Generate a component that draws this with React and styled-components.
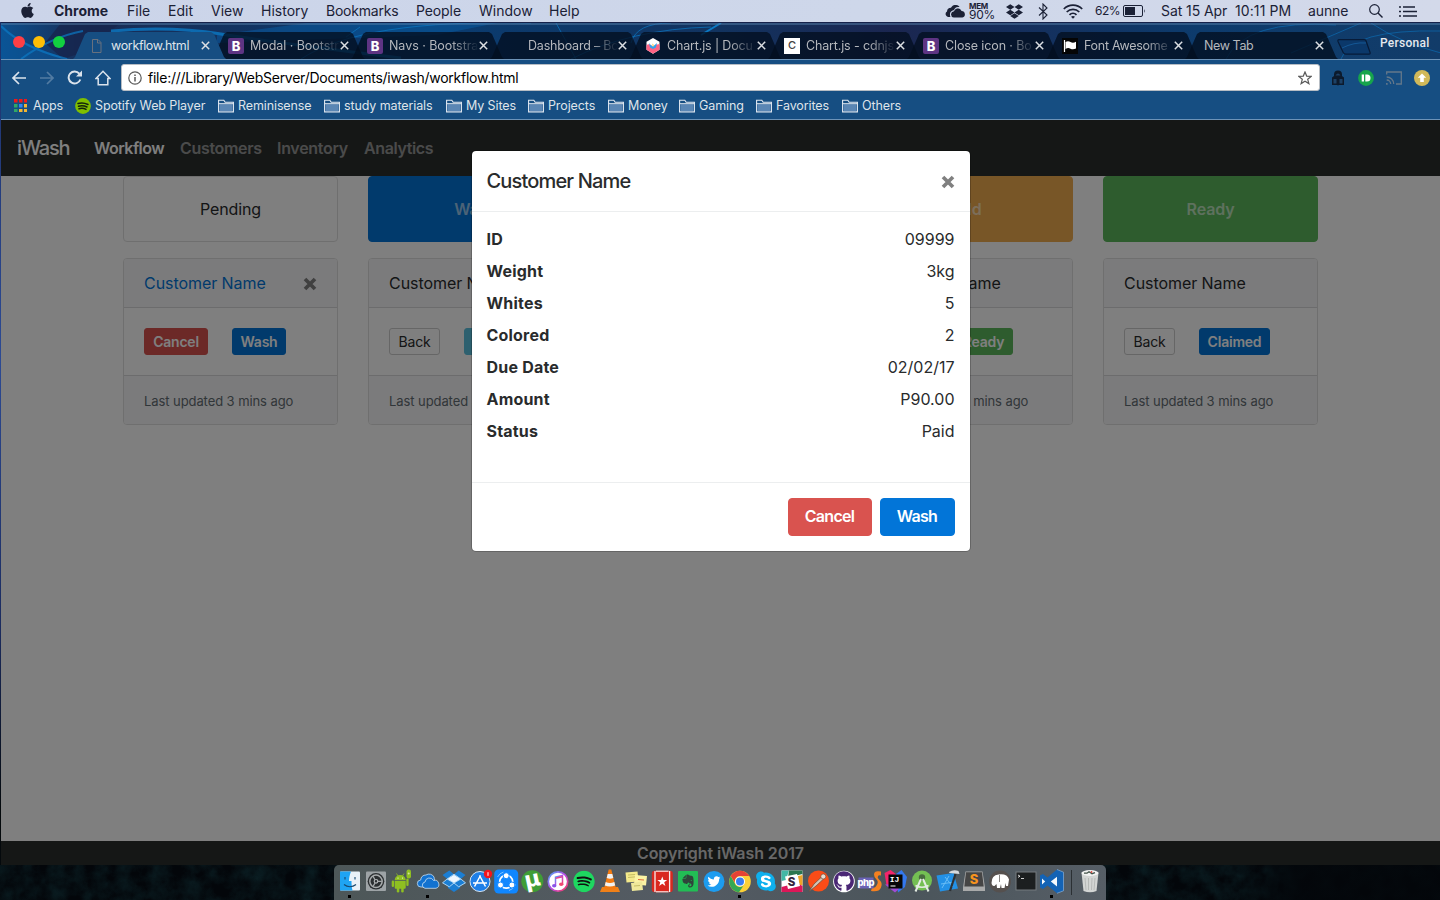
import React from "react";
import styled, { createGlobalStyle, css } from "styled-components";
import {
  FaApple,
  FaDropbox,
  FaTwitter,
  FaSpotify,
  FaSkype,
  FaGithub,
  FaEvernote,
} from "react-icons/fa";

const GlobalStyle = createGlobalStyle`
  *, *::before, *::after { box-sizing: border-box; }
  html, body { margin: 0; padding: 0; }
  body {
    width: 1440px;
    height: 900px;
    overflow: hidden;
    background: #04090c;
    font-family: Inter, Roboto, "Liberation Sans", sans-serif;
  }
  svg { display: block; flex: none; }
`;

const Desktop = styled.div`
  width: 1440px;
  height: 900px;
  display: flex;
  flex-direction: column;
  overflow: hidden;
  background: linear-gradient(#1c2f66 0, #2c4a94 40%, #1b2b5e 70%, #04090c 90%);
`;

/* ---------- macOS menu bar ---------- */

const MenuBar = styled.header`
  height: 22px;
  flex: none;
  display: flex;
  align-items: center;
  background: linear-gradient(90deg, #cbd4e9, #ced7ea 60%, #d3d9ea);
  color: #1b2136;
  font-size: 14px;
  line-height: 22px;
  white-space: nowrap;
`;

const AppleSlot = styled.div`
  width: 54px;
  padding: 0 0 2px 19px;
  font-size: 17px;
`;

const MenuItem = styled.div`
  width: ${(p) => p.$w}px;
  flex: none;
  letter-spacing: ${(p) => p.$ls || 0}px;
  font-weight: ${(p) => (p.$bold ? 750 : 430)};
  font-size: ${(p) => p.$size || 14}px;
`;

const MenuIcon = styled.div`
  width: ${(p) => p.$w}px;
  flex: none;
`;

const MenuSpacer = styled.div`
  flex: 1;
`;

const MemoryMeter = styled.div`
  width: 37px;
  display: flex;
  flex-direction: column;
  font-size: 12px;
  line-height: 10px;
  letter-spacing: -0.3px;
`;

const MemoryLabel = styled.span`
  font-size: 8px;
  line-height: 8px;
  font-weight: 700;
`;

/* ---------- Browser window ---------- */

const Window = styled.div`
  height: 843px;
  flex: none;
  display: flex;
  flex-direction: column;
  padding-left: 1px;
`;

const TabStrip = styled.div`
  height: 38px;
  flex: none;
  position: relative;
  display: flex;
  align-items: flex-end;
  padding-left: 11px;
  border-top: 1px solid #16224a;
  border-bottom: 1px solid #6c93b8;
  overflow: hidden;
  background: #14284c;
`;

const StripArt = styled.svg`
  position: absolute;
  left: 0;
  top: 0;
`;

const TrafficLights = styled.div`
  position: relative;
  width: 61px;
  display: flex;
  gap: 8px;
  padding: 0 0 11px 1px;
`;

const Light = styled.i`
  width: 12px;
  height: 12px;
  border-radius: 50%;
  background: ${(p) => p.$color};
`;

const Tab = styled.div`
  position: relative;
  z-index: ${(p) => (p.$active ? 2 : 1)};
  width: 153px;
  height: 27px;
  margin-right: -14px;
  padding-left: ${(p) => (p.$plain ? 19 : 16)}px;
  flex: none;
  display: flex;
  align-items: center;
  clip-path: polygon(0 100%, 2px 25px, 12px 2px, 15px 0, 138px 0, 141px 2px, 151px 25px, 153px 100%);
  background: ${(p) => (p.$active ? "#164e82" : "rgba(3, 14, 31, 0.78)")};
  color: ${(p) => (p.$active ? "#dfe4ea" : "#b5b8bd")};
`;

const Favicon = styled.div`
  width: 22px;
  flex: none;
`;

const BootstrapMark = styled.div`
  width: 16px;
  height: 16px;
  border-radius: 2px;
  background: #5e3483;
  color: #fff;
  font: 800 13px/16px Inter, sans-serif;
  text-align: center;
`;

const CdnMark = styled.div`
  width: 16px;
  height: 16px;
  background: #fff;
  color: #444;
  font: 500 11px/15px Inter, sans-serif;
  text-align: center;
`;

const TabTitle = styled.div`
  width: ${(p) => (p.$plain ? 110.5 : 89.5)}px;
  flex: none;
  white-space: nowrap;
  font-size: 12.5px;
  line-height: 18px;
  letter-spacing: ${(p) => p.$ls || 0}px;
  ${(p) =>
    p.$fade &&
    css`
      mask-image: linear-gradient(90deg, #000 62px, transparent 90px);
    `}
`;

const NewTabButton = styled.svg`
  position: relative;
  margin: 0 0 4px 13px;
`;

const Profile = styled.div`
  position: relative;
  margin: 0 0 8px 9px;
  color: #e6e9ee;
  font: 500 12px/16px Roboto, sans-serif;
  letter-spacing: 0.25px;
`;

const Toolbar = styled.div`
  height: 34px;
  flex: none;
  display: flex;
  align-items: center;
  padding: 1px 0 0 10px;
  background: #164e82;
  color: #dbe3ec;
`;

const ToolButton = styled.div`
  width: 28px;
  flex: none;
  opacity: ${(p) => (p.$dim ? 0.3 : 1)};
`;

const Omnibox = styled.div`
  width: 1199px;
  height: 27px;
  flex: none;
  margin-left: -2px;
  display: flex;
  align-items: center;
  padding: 0 7px 0 6px;
  border: 1px solid #b7bdc4;
  border-radius: 3px;
  background: #fff;
  color: #000;
`;

const Address = styled.div`
  flex: 1;
  padding-left: 6px;
  font-size: 14px;
  letter-spacing: -0.25px;
  line-height: 20px;
`;

const Extensions = styled.div`
  display: flex;
  align-items: center;
  gap: 12px;
  padding-left: 10px;
`;

const BookmarksBar = styled.div`
  height: 26px;
  flex: none;
  display: flex;
  align-items: center;
  padding: 0 0 2px 13px;
  background: #164e82;
  border-bottom: 1px solid #6c93b8;
  color: #dfe4ea;
`;

const Bookmark = styled.div`
  width: ${(p) => p.$w}px;
  flex: none;
  display: flex;
  align-items: center;
  gap: ${(p) => p.$gap || 4}px;
  white-space: nowrap;
  font-size: 12.5px;
  font-weight: 430;
  line-height: 18px;
  letter-spacing: -0.11px;
`;

/* ---------- iWash page ---------- */

const Page = styled.main`
  flex: 1;
  position: relative;
  display: flex;
  flex-direction: column;
  background: #fff;
  color: #292b2c;
  font-size: 16px;
  line-height: 24px;
`;

const Navbar = styled.nav`
  height: 56px;
  flex: none;
  display: flex;
  align-items: center;
  padding-left: 16px;
  background: #2b2e2d;
`;

const Brand = styled.div`
  width: 77px;
  color: #fff;
  font-size: 20px;
  font-weight: 500;
  letter-spacing: -1.15px;
`;

const NavLink = styled.a`
  width: ${(p) => p.$w}px;
  color: ${(p) => (p.$active ? "#fff" : "rgba(255,255,255,.5)")};
  font-weight: 580;
  letter-spacing: ${(p) => p.$ls}px;
`;

const Board = styled.div`
  flex: 1;
  display: grid;
  grid-template-columns: repeat(5, 215px);
  align-content: start;
  gap: 16px 30px;
  padding-left: 122px;
`;

const tones = {
  plain: { bg: "#fff", fg: "#292b2c", line: "#ccc" },
  danger: { bg: "#d9534f", fg: "#fff", line: "#d9534f" },
  primary: { bg: "#0275d8", fg: "#fff", line: "#0275d8" },
  info: { bg: "#5bc0de", fg: "#fff", line: "#5bc0de" },
  warning: { bg: "#f0ad4e", fg: "#fff", line: "#f0ad4e" },
  success: { bg: "#5cb85c", fg: "#fff", line: "#5cb85c" },
};

const Stage = styled.div`
  height: 66px;
  display: flex;
  align-items: center;
  justify-content: center;
  border: 1px solid ${(p) => (p.$tone === "plain" ? "#dfdfdf" : tones[p.$tone].line)};
  border-radius: 4px;
  background: ${(p) => tones[p.$tone].bg};
  color: ${(p) => (p.$tone === "plain" ? "#292b2c" : "rgba(255,255,255,.6)")};
  font-weight: ${(p) => (p.$tone === "plain" ? 400 : 580)};
  letter-spacing: -0.15px;
`;

const Card = styled.section`
  height: 167px;
  border: 1px solid #dfdfdf;
  border-radius: 4px;
  background: #fff;
  overflow: hidden;
`;

const CardHeader = styled.div`
  height: 49px;
  display: flex;
  align-items: center;
  justify-content: space-between;
  padding: 0 20px;
  background: #f7f7f9;
  border-bottom: 1px solid #d9d9da;
  color: ${(p) => (p.$link ? "#0275d8" : "#292b2c")};
  letter-spacing: -0.06px;
`;

const CardBody = styled.div`
  height: 67px;
  display: flex;
  align-items: center;
  gap: 24px;
  padding: 0 20px;
`;

const SmallButton = styled.button`
  width: ${(p) => p.$w}px;
  height: 27px;
  padding: 0;
  border: 1px solid ${(p) => tones[p.$tone].line};
  border-radius: 3px;
  background: ${(p) => tones[p.$tone].bg};
  color: ${(p) => tones[p.$tone].fg};
  font: ${(p) => (p.$tone === "plain" ? 400 : 580)} 14px/21px Inter, sans-serif;
  letter-spacing: -0.22px;
`;

const CardFooter = styled.div`
  height: 49px;
  display: flex;
  align-items: center;
  padding: 2px 20px 0;
  border-top: 1px solid #d9d9da;
  background: #f7f7f9;
  color: #636c72;
  font-size: 13px;
  letter-spacing: -0.08px;
`;

const PageFooter = styled.footer`
  height: 24px;
  flex: none;
  background: #2b2e2d;
  color: rgba(255, 255, 255, 0.78);
  font-weight: 560;
  letter-spacing: -0.09px;
  text-align: center;
`;

const Backdrop = styled.div`
  position: absolute;
  inset: 0;
  display: flex;
  align-items: flex-start;
  justify-content: center;
  padding-top: 30px;
  background: rgba(0, 0, 0, 0.5);
`;

const Modal = styled.div`
  width: 500px;
  border: 1px solid rgba(0, 0, 0, 0.2);
  border-radius: 5px;
  background: #fff;
  background-clip: padding-box;
`;

const ModalHeader = styled.div`
  height: 61px;
  display: flex;
  align-items: center;
  justify-content: space-between;
  padding: 0 15px;
  border-bottom: 1px solid #eceeef;
`;

const ModalTitle = styled.h5`
  margin: 0;
  font-size: 20px;
  line-height: 30px;
  font-weight: 450;
  letter-spacing: -0.83px;
`;

const ModalBody = styled.div`
  padding: 15px 15px 31px;
`;

const Detail = styled.div`
  height: 32px;
  display: flex;
  justify-content: space-between;
`;

const Term = styled.strong`
  font-weight: 690;
  letter-spacing: 0.2px;
`;

const ModalFooter = styled.div`
  height: 69px;
  display: flex;
  align-items: center;
  justify-content: flex-end;
  gap: 8px;
  padding: 0 15px;
  border-top: 1px solid #eceeef;
`;

const Button = styled(SmallButton)`
  height: 38px;
  padding-bottom: 2px;
  border-radius: 4px;
  font-size: 16px;
  letter-spacing: -0.7px;
`;

const CloseIcon = styled.svg`
  margin-top: 2px;
`;

/* ---------- Dock ---------- */

const Shelf = styled.div`
  flex: 1;
  position: relative;
  display: flex;
  justify-content: center;
  overflow: hidden;
  background: #03060a;
`;

const Foliage = styled.svg`
  position: absolute;
  left: 0;
  top: 0;
`;

const Dock = styled.div`
  width: 772px;
  height: 35px;
  position: relative;
  display: flex;
  padding: 5px 0 0 3px;
  border-radius: 5px 5px 0 0;
  background: linear-gradient(90deg, #4d5758, #545b63 45%, #4b555b 75%, #565e66);
`;

const DockItem = styled.div`
  width: 26px;
  display: flex;
  flex-direction: column;
  align-items: center;
  gap: 3px;
`;

const RunningDot = styled.i`
  width: 3px;
  height: 3px;
  margin-right: 1px;
  background: #000;
`;

const DockDivider = styled.div`
  width: 1px;
  height: 25px;
  margin: 0 5px 0 6px;
  background: #2b3034;
`;

/* ---------- Icons ---------- */

const Cross = () => (
  <svg width="9" height="9" viewBox="0 0 9 9">
    <path d="M.8.800l7.400 7.400M8.200.800L.8 8.200" stroke="#dcdfe3" strokeWidth="1.500" />
  </svg>
);

const Times = () => (
  <CloseIcon width="14" height="14" viewBox="0 0 14 14">
    <path d="M2 2l10 10M12 2L2 12" stroke="#808080" strokeWidth="3.700" />
  </CloseIcon>
);

const Folder = () => (
  <svg width="16" height="14" viewBox="0 0 16 14">
    <path d="M.6 12.900V1.200h5.200l1.400 2h8.200v9.700z" fill="#164e82" stroke="#e3eaf2" strokeWidth="1.100" />
    <path d="M1.500 5.200h13v7h-13z" fill="#5a86b4" />
    <path d="M.6 4.700h14.800" stroke="#e3eaf2" />
  </svg>
);

const CloudGlyph = () => (
  <svg width="21" height="13" viewBox="0 0 21 13">
    <path d="M3 12a3 3 0 0 1-1-5.500A4 4 0 0 1 6 2.800 5 5 0 0 1 14.600 2c-3-.3-5 1-5.800 3.200C6 5.600 4.800 7.400 5 10c.1 1 .3 1.500.7 2z" fill="#1b2136" />
    <path d="M8.800 12.500a3.200 3.200 0 0 1-.4-6.300A4.400 4.400 0 0 1 16.600 6a3.300 3.300 0 0 1 .8 6.500z" fill="#1b2136" />
    <path d="M5.700 11.500q-.8-5 3.300-5.700Q10 2.800 13 2.600" fill="none" stroke="#ced7ea" strokeWidth=".8" />
  </svg>
);

const icons = {
  finder: (
    <>
      <rect x="1" y="1.500" width="20" height="19" rx="1" fill="#e9f1f7" />
      <path d="M1 1.500h11c-1.500 4-2 7-2 9.500h2.500c0 3 .2 6 1 9.500H1z" fill="#1fa4f3" />
      <path d="M6 7v2.500M16 7v2.500M5 14.500c3.500 3 8.500 3 12 0" stroke="#17486e" strokeWidth="1.100" fill="none" />
    </>
  ),
  settings: (
    <>
      <rect x="1" y="1.500" width="20" height="19.500" rx="1" fill="#9da3a6" />
      <circle cx="11" cy="11.300" r="8.300" fill="#2b2f31" />
      <circle cx="11" cy="11.300" r="6.200" fill="none" stroke="#a7abac" strokeWidth="1.500" />
      <circle cx="11" cy="11.300" r="1.800" fill="none" stroke="#b4b7b8" strokeWidth="1.200" />
      <path d="M12.800 11.300h4M10 9.700L8 6.200M10 13l-2 3.500" stroke="#a7abac" strokeWidth="1.300" />
    </>
  ),
  android: (
    <g fill="#8fbf21">
      <path d="M3.700 10a5.500 5 0 0 1 11 0zM3.700 10.800h11v7a1 1 0 0 1-1 1h-9a1 1 0 0 1-1-1z" />
      <path d="M5.500 3.500L7 6M13 3.500L11.500 6" stroke="#8fbf21" strokeWidth=".8" />
      <rect x=".7" y="10.500" width="2.400" height="6.500" rx="1.200" />
      <rect x="5.800" y="16" width="2.500" height="6.500" rx="1.200" />
      <rect x="10.200" y="16" width="2.500" height="6.500" rx="1.200" />
      <rect x="15.300" y="8.500" width="2.300" height="7.500" rx="1.100" />
      <rect x="15.500" y="-.5" width="4.500" height="9" rx="2" />
      <circle cx="17.700" cy="3.500" r="1" fill="#d4e39c" />
      <circle cx="7" cy="8" r=".6" fill="#fff" />
      <circle cx="11.500" cy="8" r=".6" fill="#fff" />
    </g>
  ),
  onedrive: (
    <g fill="#1272d0" stroke="#c7def3" strokeWidth=".8">
      <path d="M4 17a3.500 3.500 0 0 1-.3-7A5 5 0 0 1 9 5a5.600 5.600 0 0 1 8 2l1.500 10z" />
      <path d="M8 18.300a3.200 3.200 0 0 1 0-6.300 4.500 4.500 0 0 1 8.500-1.500 3.900 3.900 0 1 1 2.500 7.800z" />
    </g>
  ),
  dropbox: (
    <>
      <path d="M6.300.500L11 4.200 15.700.500 22.500 5 17.800 9l4.700 3.800L17 16.500V18l-6 4-6-4v-1.500l-5.500-3.700L4.200 9-.5 5z" fill="#1b7ed3" />
      <path d="M11 4.700L17.800 9 11 13 4.200 9z" fill="#eef7ff" />
      <path d="M4.200 9L11 13l6.800-4M4.200 9L11 4.200 17.800 9l4.700 3.800-6.800 4L11 13l-4.700 3.800-6.800-4z" fill="none" stroke="#b8dcf7" strokeWidth=".9" />
    </>
  ),
  appstore: (
    <>
      <circle cx="11" cy="11.500" r="10" fill="#1e7fe8" stroke="#d7e7f5" strokeWidth="1" />
      <path d="M5.500 16.500L11.500 5.500M10.500 5.500l6 11M4 13h14" stroke="#fff" strokeWidth="1.500" />
      <circle cx="19" cy="4" r="4.200" fill="#f5141b" />
      <path d="M19 2.200v3.600" stroke="#fff" />
    </>
  ),
  share: (
    <>
      <rect x="-.8" y="-.5" width="24" height="24" rx="4.500" fill="#1087ff" />
      <path d="M2.500 7a9.800 9.800 0 0 1 6-5M14 20.500a9.800 9.800 0 0 0 6.500-6" stroke="#7fc0ff" fill="none" />
      <circle cx="11.200" cy="11.700" r="6.500" fill="none" stroke="#fff" strokeWidth="1.700" />
      <circle cx="11.200" cy="5.700" r="3" fill="#fff" stroke="#1087ff" />
      <circle cx="5.500" cy="15" r="3" fill="#fff" stroke="#1087ff" />
      <circle cx="16.900" cy="15" r="3" fill="#fff" stroke="#1087ff" />
    </>
  ),
  utorrent: (
    <>
      <circle cx="11.300" cy="11.300" r="11" fill="#3f9d36" />
      <text x="11.500" y="17" textAnchor="middle" fontSize="23" fontWeight="800" fill="#fff" transform="rotate(-12 11 11)">µ</text>
    </>
  ),
  itunes: (
    <>
      <circle cx="11" cy="11.500" r="9.700" fill="#fff" stroke="url(#tunes)" strokeWidth="1.700" />
      <path d="M8.500 15.500V7l7-1.500V14" stroke="url(#tunes)" strokeWidth="1.500" fill="none" />
      <path d="M8.500 8.200l7-1.500" stroke="#e0438f" strokeWidth="1.500" />
      <ellipse cx="7.200" cy="15.700" rx="2.200" ry="1.700" fill="#8a55e8" />
      <ellipse cx="14.200" cy="14.200" rx="2.200" ry="1.700" fill="#f04a72" />
    </>
  ),
  spotify: (
    <>
      <circle cx="11" cy="11.500" r="9" fill="#101010" />
      <FaSpotify x="0" y=".5" size={22} color="#1ed760" />
    </>
  ),
  vlc: (
    <>
      <path d="M3 17h16l2 5H1z" fill="#f08018" />
      <path d="M9.700-.5h2.600L17 18.500q-6 2.500-12 0z" fill="#f47a10" />
      <path d="M8.700 4h4.600l1 4q-3.300 1.500-6.600 0zM6.700 12q4.300 2 8.600 0l.9 3.500q-5.200 2-10.400 0z" fill="#f2f2f2" />
    </>
  ),
  stickies: (
    <>
      <path d="M.5 2.500l12-1 1 10-12 1z" fill="#f3e98b" />
      <path d="M10 5l12 1-1 9.500-12-1z" fill="#fbf3a4" />
      <path d="M6 13l11-1.500 1 8.500-11 1z" fill="#f0e99a" />
      <path d="M3 5l7-.5M3 7.500l7-.6M9 16l6-.5" stroke="#b3a950" strokeWidth=".7" />
      <path d="M13 9.500l6 .5" stroke="#e06c3c" />
    </>
  ),
  wunderlist: (
    <>
      <rect x=".8" y=".8" width="21" height="21.400" rx="3" fill="#d9281f" />
      <path d="M4 1v21M18.600 1v21" stroke="#f7eeee" strokeWidth="1.300" />
      <path d="M5 1.200h12.500M5 21.800h12.500" stroke="#fff" />
      <path d="M11.300 6.500l1.200 3.600h3.700l-3 2.200 1.200 3.700-3.100-2.300L8.100 16l1.200-3.700-3-2.200H10z" fill="#fff" />
    </>
  ),
  evernote: (
    <>
      <rect x="1" y="1" width="20" height="20.500" rx="1" fill="#22bd55" />
      <FaEvernote x="3.500" y="3.500" size={15} color="#30443b" />
    </>
  ),
  twitter: (
    <>
      <circle cx="11" cy="11.500" r="10.500" fill="#1d9cf0" />
      <FaTwitter x="4.500" y="5" size={13} color="#fff" />
    </>
  ),
  chrome: (
    <>
      <circle cx="11" cy="11.500" r="10.800" fill="#fcd037" />
      <path d="M1.700 6.100a10.800 10.800 0 0 1 18.700 0H11a5.300 5.300 0 0 0-5 7z" fill="#e54235" />
      <path d="M1.700 6.100A10.800 10.800 0 0 0 10 22.200l4.800-7a5.200 5.200 0 0 1-8.800-1.500z" fill="#35a853" />
      <circle cx="11" cy="11.500" r="5" fill="#fff" />
      <circle cx="11" cy="11.500" r="4" fill="#397df0" />
    </>
  ),
  skype: (
    <>
      <circle cx="11" cy="11.500" r="7.500" fill="#fff" />
      <FaSkype x="-.3" y=".2" size={22.500} color="#0eb0ee" />
    </>
  ),
  slack: (
    <>
      <path d="M.5.500H21.500V22H.5z" fill="#fff" />
      <path d="M.5.500H8L5 10l-4.500 1z" fill="#43b8a5" />
      <path d="M8 .5h13.500v3.500L7 7.500z" fill="#2b7650" />
      <path d="M17 6l4.500-1v10l-3 1z" fill="#eda529" />
      <path d="M.5 17L16 13l5.500 3v6H.5z" fill="#dc1758" />
      <path d="M4 6.500l12-2.500 3 12-12 3z" fill="#fff" />
      <text x="10.500" y="15.500" textAnchor="middle" fontSize="11.500" fontWeight="800" fill="#35243e">S</text>
    </>
  ),
  postman: (
    <>
      <circle cx="11.500" cy="11" r="10.500" fill="#fb4c17" />
      <path d="M2 21.500L7 14l7.500-7 2 2L9 16z" fill="#d2c2b4" stroke="#6b4a38" strokeWidth=".7" />
      <circle cx="16.300" cy="6.500" r="2.500" fill="#e9ddd2" stroke="#5f4433" strokeWidth=".6" />
    </>
  ),
  github: (
    <>
      <circle cx="11" cy="11.500" r="10.800" fill="#fff" />
      <FaGithub x=".7" y="1" size={20.500} color="#4a2775" />
    </>
  ),
  phpstorm: (
    <>
      <path d="M22 1.500q-7-1.500-7 3 0 3 2.500 5t0 6q-1.500 3-4.500 2l-1 3.500q8 1.500 10-3.500t-2-8q-2-2-1-3.500.8-1.200 3-.5z" fill="#f58020" />
      <rect x="-.5" y="7.500" width="15" height="11" fill="#6a62b5" />
      <text x="6.800" y="15.800" textAnchor="middle" fontSize="9.500" fontWeight="800" fill="#fff" letterSpacing="-.5">php</text>
    </>
  ),
  intellij: (
    <>
      <path d="M-.5 3l6-3 8 6-6 12-6-3z" fill="#f4246b" />
      <path d="M11 4l5.500-4L22 7l-2 10-7 5.500z" fill="#3478ee" />
      <path d="M0 14.500l10-.5 4 5-4 3.500z" fill="#a04bd6" />
      <rect x="3.500" y="4.500" width="14" height="14" fill="#060606" />
      <text x="4.800" y="11.800" fontSize="8" fontWeight="700" fill="#fff" fontFamily="Liberation Mono">IJ</text>
      <path d="M5.500 16h5" stroke="#fff" />
    </>
  ),
  studio: (
    <>
      <circle cx="11" cy="10.500" r="10" fill="#74bf53" />
      <circle cx="11" cy="7.500" r="3.200" fill="#496b3f" />
      <path d="M10 9L4.500 21.500M12 9l5.500 12.500" stroke="#e4ece3" strokeWidth="2" />
      <path d="M4.500 15.500q6.500 3.500 13 0" stroke="#e4ece3" strokeWidth="1.500" fill="none" />
    </>
  ),
  xcode: (
    <>
      <path d="M-.5 5.500l17-2.500 4.500 15.500-18 3z" fill="#2391e6" />
      <path d="M5 18L12 6M8 7l8 10M4 14l13-2" stroke="#69bdf6" strokeWidth="1" />
      <path d="M13 21l5.500-17" stroke="#2e3236" strokeWidth="2.200" />
      <path d="M12 2q4.500-3 9.500-1l1 3-10-1z" fill="#d6dade" />
    </>
  ),
  sublime: (
    <>
      <path d="M2.500 1.500h17l2.500 16V21H0v-3.500z" fill="#a9aaaa" />
      <path d="M3 2.200h16l1.700 14.300H1.300z" fill="#454545" />
      <text x="11" y="14" textAnchor="middle" fontSize="13" fontWeight="800" fill="#f7931d">S</text>
    </>
  ),
  mamp: (
    <>
      <circle cx="11" cy="11.500" r="10.900" fill="#55504e" />
      <path d="M2.500 13q0-8 7-8.500 9-1 10.500 5l-1 6.500h-2l-.5-3-1 5h-3l-.5-4-1 4H8l-.5-4-2 2q-2.500.5-3-3z" fill="#fff" />
      <path d="M10.500 5v7" stroke="#55504e" strokeWidth=".7" />
    </>
  ),
  terminal: (
    <>
      <rect x="1" y="2" width="20" height="18" fill="#1c1f20" stroke="#747b7f" />
      <path d="M3 5l2 1.200-2 1.200M6 8.500h3" stroke="#e6e6e6" strokeWidth=".9" fill="none" />
    </>
  ),
  vscode: (
    <>
      <path d="M16-.5l6.500 2.700v18.600L16 23.300 6.500 15.500 2 19l-3-1.500v-12L2 4l4.500 3.500z" fill="#1463b5" />
      <path d="M16 6.800v9.700L9.800 11.600zM1 8.500v6l3.200-3z" fill="#f5f9fd" />
      <path d="M16-.5l6.500 2.700v18.600L16 23.300" fill="none" stroke="#86afd9" strokeWidth=".7" />
    </>
  ),
  trash: (
    <>
      <path d="M2.500 2.500h17L17.500 21q-6.500 2.500-13 0z" fill="#d3d5d4" />
      <ellipse cx="11" cy="3" rx="8.500" ry="3" fill="#f2f2f2" />
      <path d="M5 3.200h3l2-1.500 3 2 3-1" stroke="#44544b" strokeWidth="1.300" fill="none" />
      <path d="M6 8l1 12M9.500 8v12M13 8l-.5 12M16 8l-1 12" stroke="#aeb1b0" strokeWidth=".8" />
      <circle cx="12.500" cy="2" r=".9" fill="#d8463f" />
    </>
  ),
};

const DockIcon = ({ name }) => (
  <svg width="22" height="22" viewBox="0 0 22 22" overflow="visible" fontFamily="Inter, sans-serif">
    {icons[name]}
  </svg>
);

/* ---------- Data ---------- */

const menus = [
  ["File", 41],
  ["Edit", 43],
  ["View", 50],
  ["History", 65],
  ["Bookmarks", 90, -0.22],
  ["People", 63, -0.1],
  ["Window", 70],
  ["Help", 60],
];

const BMark = () => <BootstrapMark>B</BootstrapMark>;

const tabs = [
  { title: "Modal · Bootstr", icon: <BMark />, ls: -0.05 },
  { title: "Navs · Bootstra", icon: <BMark />, ls: -0.05 },
  { title: "Dashboard – Bo", icon: null, ls: -0.2 },
  {
    title: "Chart.js | Docu",
    ls: -0.15,
    icon: (
      <svg width="16" height="16" viewBox="0 0 16 16">
        <path d="M8 0l6.500 3.800v8L8 15.700l-6.500-3.900v-8z" fill="#fff" />
        <path d="M1.500 7q3.500-2 6.500 2 3-3 6.500-3v5.800L8 15.700l-6.500-3.900z" fill="#ff6384" />
        <path d="M4 5q2 3 4 3.500l4-3.500-1 4.500-3 1.500-3-1.500z" fill="#36a2eb" />
        <path d="M7 5.500l2 1.500-1 2z" fill="#ffce56" />
      </svg>
    ),
  },
  { title: "Chart.js - cdnjs", icon: <CdnMark>C</CdnMark>, ls: -0.15 },
  { title: "Close icon · Bo", icon: <BMark />, ls: -0.12 },
  {
    title: "Font Awesome",
    ls: -0.28,
    icon: (
      <svg width="16" height="16" viewBox="0 0 16 16">
        <path d="M0 0h16v16H0z" fill="#050505" />
        <path d="M2.500 2v12" stroke="#fff" strokeWidth="1.200" />
        <path d="M3.500 4q2.500-1.500 5 0t5.500-.3v6.800q-3 1.500-5.500.2t-5 .3z" fill="#fff" />
      </svg>
    ),
  },
  { title: "New Tab", plain: true, ls: -0.4 },
];

const folders = [
  ["Reminisense", 106],
  ["study materials", 122],
  ["My Sites", 82],
  ["Projects", 80],
  ["Money", 71],
  ["Gaming", 77],
  ["Favorites", 86],
  ["Others", 70],
];

const stages = [
  { name: "Pending", tone: "plain", active: true, actions: [["Cancel", "danger", 64], ["Wash", "primary", 54]] },
  { name: "Wash", tone: "primary", actions: [["Back", "plain", 51], ["Dry", "info", 44]] },
  { name: "Dry", tone: "info", actions: [["Back", "plain", 51], ["Fold", "warning", 47]] },
  { name: "Fold", tone: "warning", actions: [["Back", "plain", 51], ["Ready", "success", 59]] },
  { name: "Ready", tone: "success", actions: [["Back", "plain", 51], ["Claimed", "primary", 71]] },
];

const details = [
  ["ID", "09999"],
  ["Weight", "3kg"],
  ["Whites", "5"],
  ["Colored", "2"],
  ["Due Date", "02/02/17"],
  ["Amount", "P90.00"],
  ["Status", "Paid"],
];

const dockApps = [
  "finder", "settings", "android", "onedrive", "dropbox", "appstore", "share", "utorrent", "itunes", "spotify",
  "vlc", "stickies", "wunderlist", "evernote", "twitter", "chrome", "skype", "slack", "postman", "github",
  "phpstorm", "intellij", "studio", "xcode", "sublime", "mamp", "terminal", "vscode",
];
const running = ["finder", "onedrive", "chrome", "vscode"];

/* ---------- Sections ---------- */

const SystemMenu = () => (
  <MenuBar>
    <AppleSlot><FaApple /></AppleSlot>
    <MenuItem $w={73} $bold>Chrome</MenuItem>
    {menus.map(([name, w, ls]) => (
      <MenuItem key={name} $w={w} $ls={ls}>{name}</MenuItem>
    ))}
    <MenuSpacer />
    <MenuIcon $w={24}><CloudGlyph /></MenuIcon>
    <MemoryMeter>
      <MemoryLabel>MEM</MemoryLabel>90%
    </MemoryMeter>
    <MenuIcon $w={32}><FaDropbox size={17} /></MenuIcon>
    <MenuIcon $w={25}>
      <svg width="11" height="17" viewBox="0 0 11 17">
        <path d="M1 4.500l8 7.500-4 4V1l4 4-8 7.500" fill="none" stroke="#1b2136" strokeWidth="1.100" />
      </svg>
    </MenuIcon>
    <MenuIcon $w={32}>
      <svg width="20" height="15" viewBox="0 0 20 15">
        <path d="M.8 5a13 13 0 0 1 18.400 0M3.700 8a9 9 0 0 1 12.600 0M6.500 10.800a5 5 0 0 1 7 0" fill="none" stroke="#1b2136" strokeWidth="1.700" />
        <path d="M10 14.800l-2-2a3 3 0 0 1 4 0z" fill="#1b2136" />
      </svg>
    </MenuIcon>
    <MenuItem $w={28} $size={12} $ls={-0.5}>62%</MenuItem>
    <MenuIcon $w={38}>
      <svg width="23" height="12" viewBox="0 0 23 12">
        <rect x=".5" y=".5" width="19" height="11" rx="1.500" fill="none" stroke="#1b2136" />
        <path d="M2 2h10v8H2z" fill="#1b2136" />
        <path d="M21 4q1.500 2 0 4z" fill="#1b2136" />
      </svg>
    </MenuIcon>
    <MenuItem $w={74} $ls={-0.07}>Sat 15 Apr</MenuItem>
    <MenuItem $w={73} $ls={0.1}>10:11 PM</MenuItem>
    <MenuItem $w={61} $ls={-0.1}>aunne</MenuItem>
    <MenuIcon $w={30}>
      <svg width="14" height="14" viewBox="0 0 14 14">
        <circle cx="5.500" cy="5.500" r="4.800" fill="none" stroke="#1b2136" strokeWidth="1.200" />
        <path d="M9 9l4.500 4.500" stroke="#1b2136" strokeWidth="1.400" />
      </svg>
    </MenuIcon>
    <MenuIcon $w={41}>
      <svg width="18" height="11" viewBox="0 0 18 11">
        <path d="M0 1h2M0 5.500h2M0 10h2M4 1h12M4 5.500h14M4 10h14" stroke="#1b2136" strokeWidth="1.700" />
      </svg>
    </MenuIcon>
  </MenuBar>
);

const Tabs = () => (
  <TabStrip>
    <StripArt width="1440" height="36" viewBox="0 0 1440 36">
      <defs>
        <linearGradient id="sky" x1="0" x2="1">
          <stop offset="0" stopColor="#0d4f8c" />
          <stop offset=".06" stopColor="#182c55" />
          <stop offset=".3" stopColor="#0a3c70" />
          <stop offset=".5" stopColor="#12335f" />
          <stop offset=".62" stopColor="#1b2650" />
          <stop offset=".83" stopColor="#0d3b6c" />
          <stop offset="1" stopColor="#123c69" />
        </linearGradient>
        <linearGradient id="tunes" x1="0" x2="1" y2="1">
          <stop offset="0" stopColor="#4aa8f6" />
          <stop offset=".5" stopColor="#b84be6" />
          <stop offset="1" stopColor="#fb3d5d" />
        </linearGradient>
      </defs>
      <rect width="1440" height="36" fill="url(#sky)" />
      <path d="M0 1q20 22 70 35H0zM216 12l90-12h190l-60 12-220 8z" fill="#0a5a9f" opacity=".55" />
      <path d="M60 0h60L80 30 62 36 44 20z" fill="#17264e" opacity=".8" />
      <g fill="none" stroke="#0b79c4">
        <path d="M0 3q22 22 66 33M20 36q30-22 62-28" strokeWidth="2" opacity=".7" />
        <path d="M110 8q60-5 110 3t180 24" strokeWidth="3" opacity=".8" />
        <path d="M300 36q60-40 230-36M345 14l14-10M555 0l20 36M630 20q5-20 40-20M570 36q60-30 140-32" opacity=".7" />
        <path d="M700 12l20-12" strokeWidth="2" />
        <path d="M1225 36q20-40 110-34M1340 36q10-30 100-28M1370 0q30 20 70 30M1290 30l70-30" opacity=".55" />
      </g>
      <path d="M0 1h1440" stroke="#547ca5" />
    </StripArt>
    <TrafficLights>
      <Light $color="#ff3f45" />
      <Light $color="#ffbe05" />
      <Light $color="#12d040" />
    </TrafficLights>
    <Tab $active>
      <Favicon>
        <svg width="16" height="16" viewBox="0 0 16 16">
          <path d="M3.500 1.500h5.500l3 3v10H3.500zM8.500 1.500v3.500H12" fill="none" stroke="#68717e" />
        </svg>
      </Favicon>
      <TabTitle $ls={-0.34}>workflow.html</TabTitle>
      <Cross />
    </Tab>
    {tabs.map((t) => (
      <Tab key={t.title} $plain={t.plain}>
        {!t.plain && <Favicon>{t.icon}</Favicon>}
        <TabTitle $plain={t.plain} $fade={!t.plain} $ls={t.ls}>{t.title}</TabTitle>
        <Cross />
      </Tab>
    ))}
    <NewTabButton width="34" height="16" viewBox="0 0 34 16">
      <path d="M2 .7h25q1.500 0 2 1l4 11.500q.6 2-1 2H9q-2 0-2.800-1.700L1 2.500Q.5.700 2 .700z" fill="#0b386a" stroke="#071b38" strokeWidth="1.200" />
      <path d="M5 9q12-6 24-5" stroke="#145795" fill="none" />
    </NewTabButton>
    <Profile>Personal</Profile>
  </TabStrip>
);

const AddressRow = () => (
  <Toolbar>
    <ToolButton>
      <svg width="15" height="14" viewBox="0 0 15 14">
        <path d="M15 7H2.500M8 1L2 7l6 6" fill="none" stroke="currentColor" strokeWidth="1.700" />
      </svg>
    </ToolButton>
    <ToolButton $dim>
      <svg width="15" height="14" viewBox="0 0 15 14">
        <path d="M1 7h12.500M8 1l6 6-6 6" fill="none" stroke="currentColor" strokeWidth="1.700" />
      </svg>
    </ToolButton>
    <ToolButton>
      <svg width="15" height="15" viewBox="0 0 15 15">
        <path d="M13.300 9.500A6 6 0 1 1 12.300 3.700" fill="none" stroke="currentColor" strokeWidth="1.900" />
        <path d="M15 .5v6H9z" fill="currentColor" />
      </svg>
    </ToolButton>
    <ToolButton>
      <svg width="16" height="16" viewBox="0 0 16 16">
        <path d="M1 8.500L8 1.300l7 7.200h-2.200v6.300H3.200V8.500z" fill="none" stroke="currentColor" strokeWidth="1.500" />
      </svg>
    </ToolButton>
    <Omnibox>
      <svg width="14" height="14" viewBox="0 0 14 14">
        <circle cx="7" cy="7" r="6.200" fill="none" stroke="#5a5a5a" strokeWidth="1.200" />
        <path d="M7 6v4.500M7 3.500V5" stroke="#5a5a5a" strokeWidth="1.500" />
      </svg>
      <Address>file:///Library/WebServer/Documents/iwash/workflow.html</Address>
      <svg width="14" height="14" viewBox="0 0 14 14">
        <path d="M7 1l1.700 4.100 4.500.3-3.500 2.900 1.200 4.300L7 10.200l-3.900 2.400 1.200-4.300L.8 5.400l4.500-.3z" fill="none" stroke="#5a5a5a" strokeWidth="1.200" />
      </svg>
    </Omnibox>
    <Extensions>
      <svg width="16" height="16" viewBox="0 0 16 16">
        <path d="M4 6V4.500Q4 .5 8 .500t4 4V6l2 1.500V15h-5l-1 .5-1-.5H2V7.500z" fill="#0c1a2c" />
        <path d="M5.500 5.500q2.500-4 5 0zM3.500 9h3v4.500h-3zM9.500 9h3v4.500h-3z" fill="#1c4166" />
      </svg>
      <svg width="16" height="16" viewBox="0 0 16 16">
        <circle cx="8" cy="8" r="7.900" fill="#16a44c" />
        <path d="M3.700 4.500H6v7H3.700zM7.300 4.500H9a3.500 3.500 0 0 1 0 7H7.300z" fill="#fff" />
      </svg>
      <svg width="16" height="14" viewBox="0 0 16 14">
        <path d="M.7 3.500V1h14.600v12H10M.7 12v1h1M.7 9a4 4 0 0 1 4 4M.7 6a7 7 0 0 1 7 7" fill="none" stroke="#64788a" strokeWidth="1.300" />
      </svg>
      <svg width="16" height="16" viewBox="0 0 16 16">
        <circle cx="8" cy="8" r="8" fill="#d1b95a" />
        <path d="M8 3.500l4.200 4.300h-2.400V12H6.200V7.800H3.800z" fill="#fff" />
      </svg>
    </Extensions>
  </Toolbar>
);

const appDots = [
  "#f01818", "#f01818", "#f01818",
  "#2fa866", "#2f86f4", "#f2b632",
  "#2fa866", "#f2b632", "#f2b632",
];

const Bookmarks = () => (
  <BookmarksBar>
    <Bookmark $w={61} $gap={6}>
      <svg width="13" height="13" viewBox="0 0 13 13">
        {appDots.map((c, i) => (
          <rect key={i} x={(i % 3) * 5} y={Math.floor(i / 3) * 5} width="3.500" height="3.500" fill={c} />
        ))}
      </svg>
      Apps
    </Bookmark>
    <Bookmark $w={143}>
      <svg width="16" height="16" viewBox="0 0 16 16">
        <circle cx="8" cy="8" r="7.900" fill="#7fbf00" />
        <path d="M3 5.500q5-1.500 10 1M3.500 8.200q4.500-1.200 8.500.8M4 10.700q4-1 7 .7" stroke="#12230a" strokeWidth="1.500" fill="none" strokeLinecap="round" />
      </svg>
      Spotify Web Player
    </Bookmark>
    {folders.map(([name, w]) => (
      <Bookmark key={name} $w={w}>
        <Folder />
        {name}
      </Bookmark>
    ))}
  </BookmarksBar>
);

const CustomerModal = () => (
  <Backdrop>
    <Modal>
      <ModalHeader>
        <ModalTitle>Customer Name</ModalTitle>
        <Times />
      </ModalHeader>
      <ModalBody>
        {details.map(([term, value]) => (
          <Detail key={term}>
            <Term>{term}</Term>
            <span>{value}</span>
          </Detail>
        ))}
      </ModalBody>
      <ModalFooter>
        <Button $tone="danger" $w={84}>Cancel</Button>
        <Button $tone="primary" $w={75}>Wash</Button>
      </ModalFooter>
    </Modal>
  </Backdrop>
);

const IWash = () => (
  <Page>
    <Navbar>
      <Brand>iWash</Brand>
      <NavLink $w={86} $ls={-0.52} $active>Workflow</NavLink>
      <NavLink $w={97} $ls={-0.32}>Customers</NavLink>
      <NavLink $w={87} $ls={-0.3}>Inventory</NavLink>
      <NavLink $w={80} $ls={-0.38}>Analytics</NavLink>
    </Navbar>
    <Board>
      {stages.map((s) => (
        <Stage key={s.name} $tone={s.tone}>{s.name}</Stage>
      ))}
      {stages.map((s) => (
        <Card key={s.name}>
          <CardHeader $link={s.active}>
            Customer Name
            {s.active && <Times />}
          </CardHeader>
          <CardBody>
            {s.actions.map(([label, tone, w]) => (
              <SmallButton key={label} $tone={tone} $w={w}>{label}</SmallButton>
            ))}
          </CardBody>
          <CardFooter>Last updated 3 mins ago</CardFooter>
        </Card>
      ))}
    </Board>
    <PageFooter>Copyright iWash 2017</PageFooter>
    <CustomerModal />
  </Page>
);

export default function App() {
  return (
    <Desktop>
      <GlobalStyle />
      <SystemMenu />
      <Window>
        <Tabs />
        <AddressRow />
        <Bookmarks />
        <IWash />
      </Window>
      <Shelf>
        <Foliage width="1440" height="35">
          <filter id="leaves" x="0" y="0" width="100%" height="100%" colorInterpolationFilters="sRGB">
            <feTurbulence type="fractalNoise" baseFrequency="0.06" numOctaves="5" seed="4" />
            <feColorMatrix values="0 0 0 0 0.05  0 0 0 0 0.15  0 0 0 0 0.17  1.2 0.8 0 0 -0.7" />
          </filter>
          <linearGradient id="fade" x1="0" x2="1">
            <stop offset="0" stopColor="#03060a" stopOpacity=".2" />
            <stop offset=".86" stopColor="#03060a" stopOpacity=".2" />
            <stop offset=".9" stopColor="#03060a" stopOpacity=".9" />
          </linearGradient>
          <rect width="1440" height="35" filter="url(#leaves)" />
          <rect width="1440" height="35" fill="url(#fade)" />
        </Foliage>
        <Dock>
          {dockApps.map((name) => (
            <DockItem key={name}>
              <DockIcon name={name} />
              {running.includes(name) && <RunningDot />}
            </DockItem>
          ))}
          <DockDivider />
          <DockItem>
            <DockIcon name="trash" />
          </DockItem>
        </Dock>
      </Shelf>
    </Desktop>
  );
}
